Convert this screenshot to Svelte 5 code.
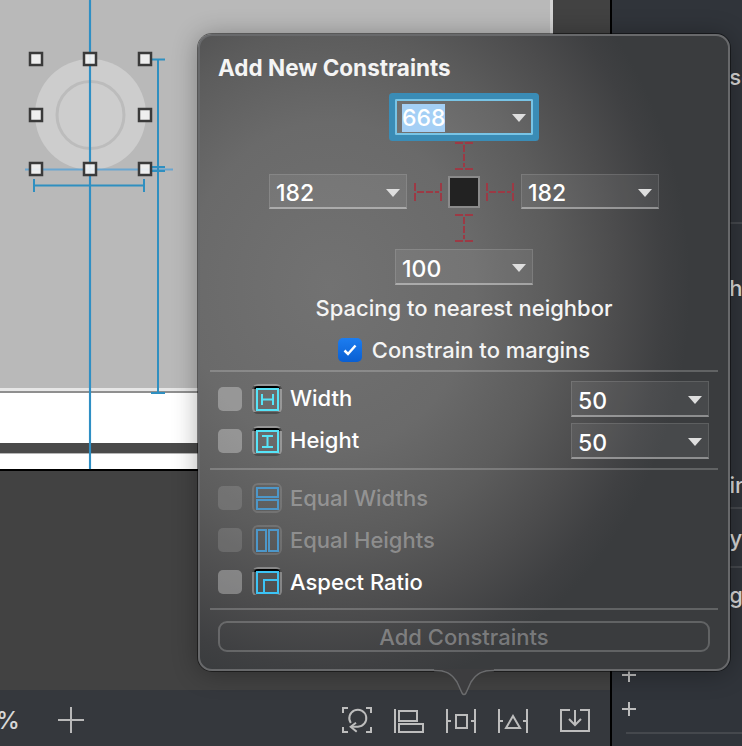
<script lang="ts">
  const handles = [
    [36, 59], [90, 59], [145, 59],
    [36, 115], [145, 115],
    [36, 169], [90, 169], [145, 169],
  ];

  const sizeRows = [
    { label: 'Width', value: '50', icon: 'width' },
    { label: 'Height', value: '50', icon: 'height' },
  ];

  const ratioRows = [
    { label: 'Equal Widths', icon: 'equal-w', disabled: true },
    { label: 'Equal Heights', icon: 'equal-h', disabled: true },
    { label: 'Aspect Ratio', icon: 'aspect', disabled: false },
  ];

  const iconPaths: Record<string, string> = {
    width: 'M1 1h21v21H1z M6 6v11 M17 6v11 M6 11.5h11',
    height: 'M1 1h21v21H1z M6 6h11 M6 17h11 M11.5 6v11',
    'equal-w': 'M1 1h21v9H1z M1 13h21v9H1z',
    'equal-h': 'M1 1h9v21H1z M13 1h9v21H13z',
    aspect: 'M1 1h21v21H1z M8 22V9h14',
  };
</script>

<div class="window">
  <main class="editor">
    <section class="canvas">
      <div class="device">
        <div class="screen">
          <svg class="drawing" width="200" height="388" viewBox="0 0 200 388">
            <circle cx="90.5" cy="114.500" r="55.500" fill="#cdcdcd" />
            <circle cx="90.5" cy="115" r="33.500" fill="none" stroke="#bcbcbc" stroke-width="3" />
          </svg>
        </div>
        <div class="ledge"></div>
        <div class="white-band"></div>
        <div class="dark-band"></div>
        <div class="white-foot"></div>
      </div>
      <div class="guide"></div>
      <svg class="marks" width="200" height="400" viewBox="0 0 200 400">
        <path d="M25 169.500h148" stroke="#6aa6d0" stroke-width="2" />
        <path d="M34 179v13M144 179v13M34 185.500h110" stroke="#2f8fc0" stroke-width="2" fill="none" />
        <path d="M152 59.500h13M158 59.500V393M151 393h14M152 167h13M152 171h13" stroke="#2f8fc0" stroke-width="2" fill="none" />
        {#each handles as [x, y]}
          <rect x={x - 6} y={y - 6} width="12" height="12" fill="#f2f2f2" fill-opacity="0.92" stroke="#3a3a3a" stroke-width="2.500" />
        {/each}
      </svg>
    </section>

    <footer class="toolbar">
      <span class="zoom-label">%</span>
      <svg class="zoom-plus" width="26" height="26" viewBox="0 0 26 26">
        <path d="M0 13h26M13 0v26" stroke="#b9b9b9" stroke-width="2" />
      </svg>
      <div class="tools">
        <svg width="30" height="26" viewBox="0 0 30 26" fill="none" stroke="#bdbdbd" stroke-width="2">
          <path d="M1 6V1h5M24 1h5v5M1 20v5h5M24 25h5v-5" />
          <path d="M16 19.700H9M16 19.700A8.500 8.500 0 1 0 8.800 16" />
          <path d="M14 15.700l-5.300 4 6 5" />
        </svg>
        <svg width="30" height="24" viewBox="0 0 30 24" fill="none" stroke="#bdbdbd" stroke-width="2">
          <path d="M1 0v24M5 2h18v10H5zM5 15h24v8H5z" />
        </svg>
        <svg width="30" height="24" viewBox="0 0 30 24" fill="none" stroke="#bdbdbd" stroke-width="2">
          <path d="M1 0v24M29 0v24M1 12h4M25 12h4M10 6h11v13H10z" />
        </svg>
        <svg width="30" height="24" viewBox="0 0 30 24" fill="none" stroke="#bdbdbd" stroke-width="2">
          <path d="M1 0v24M29 0v24M1 12h4M25 12h4M15 7l7 12H8z" />
        </svg>
        <svg class="embed" width="30" height="24" viewBox="0 0 30 24" fill="none" stroke="#bdbdbd" stroke-width="2">
          <path d="M10 2H1v21h28V2h-9M15 2v15M9 11l6 6 6-6" />
        </svg>
      </div>
    </footer>
  </main>

  <aside class="inspector">
    <p class="clipped one">Use</p>
    <div class="line line-a"></div>
    <p class="clipped two">Show</p>
    <p class="clipped three">Main</p>
    <div class="line line-b"></div>
    <p class="clipped four">Layout</p>
    <div class="line line-c"></div>
    <p class="clipped five">Tag</p>
    <svg class="plus plus-top" width="14" height="14" viewBox="0 0 14 14">
      <path d="M0 7h14M7 0v14" stroke="#bdbdbd" stroke-width="2" />
    </svg>
    <svg class="plus plus-low" width="14" height="14" viewBox="0 0 14 14">
      <path d="M0 7h14M7 0v14" stroke="#bdbdbd" stroke-width="2" />
    </svg>
    <div class="line line-d"></div>
  </aside>

  <div class="popover">
    <h2>Add New Constraints</h2>

    <div class="pin-row">
      <div class="spin focused"><span class="selected">668</span><i class="caret"></i></div>
    </div>
    <svg class="strut-v upper" width="18" height="28" viewBox="0 0 18 28" fill="none" stroke="#9c3a45" stroke-width="2">
      <path d="M0 1h18M0 27h18" stroke-dasharray="8 2" />
      <path d="M9 3v22" stroke-dasharray="7 2" />
    </svg>
    <div class="pin-row middle">
      <div class="spin"><span>182</span><i class="caret"></i></div>
      <svg class="strut-h left" width="28" height="18" viewBox="0 0 28 18" fill="none" stroke="#9c3a45" stroke-width="2">
        <path d="M1 0v18M27 0v18" stroke-dasharray="8 2" />
        <path d="M3 9h22" stroke-dasharray="7 2" />
      </svg>
      <div class="view-square"></div>
      <svg class="strut-h right" width="28" height="18" viewBox="0 0 28 18" fill="none" stroke="#9c3a45" stroke-width="2">
        <path d="M1 0v18M27 0v18" stroke-dasharray="8 2" />
        <path d="M3 9h22" stroke-dasharray="7 2" />
      </svg>
      <div class="spin"><span>182</span><i class="caret"></i></div>
    </div>
    <svg class="strut-v lower" width="18" height="28" viewBox="0 0 18 28" fill="none" stroke="#9c3a45" stroke-width="2">
      <path d="M0 1h18M0 27h18" stroke-dasharray="8 2" />
      <path d="M9 3v22" stroke-dasharray="7 2" />
    </svg>
    <div class="pin-row">
      <div class="spin"><span>100</span><i class="caret"></i></div>
    </div>

    <p class="hint">Spacing to nearest neighbor</p>
    <div class="margins">
      <span class="check">
        <svg width="18" height="18" viewBox="0 0 18 18" fill="none" stroke="#fff" stroke-width="2.500">
          <path d="M3.500 9.500l3.500 3.500 7.500-8.500" />
        </svg>
      </span>
      <span>Constrain to margins</span>
    </div>

    <div class="divider"></div>

    <div class="size-rows">
      {#each sizeRows as row}
        <div class="option">
          <span class="box"></span>
          <span class="glyph">
            <svg width="23" height="23" viewBox="0 0 23 23" fill="none" stroke="#56e4f8" stroke-width="2">
              <path d={iconPaths[row.icon]} />
            </svg>
          </span>
          <span class="label">{row.label}</span>
          <div class="spin"><span>{row.value}</span><i class="caret"></i></div>
        </div>
      {/each}
    </div>

    <div class="divider"></div>

    <div class="ratio-rows">
      {#each ratioRows as row}
        <div class="option" class:disabled={row.disabled}>
          <span class="box"></span>
          <span class="glyph">
            <svg width="23" height="23" viewBox="0 0 23 23" fill="none" stroke={row.disabled ? '#4d97c9' : '#3cc3f5'} stroke-width="2">
              <path d={iconPaths[row.icon]} />
            </svg>
          </span>
          <span class="label">{row.label}</span>
        </div>
      {/each}
    </div>

    <div class="divider"></div>

    <button class="add" disabled>Add Constraints</button>

    <svg class="arrow" width="60" height="28" viewBox="0 0 60 28">
      <path d="M0 1C12 1 17 4 23 13L28 24Q30 27 32 24L37 13C43 4 48 1 60 1V0H0Z" fill="#3d3d3f" />
      <path d="M0 1.500C12 1.500 17 4 23 13L28 24Q30 27 32 24L37 13C43 4 48 1.500 60 1.500" fill="none" stroke="#6a6b6d" stroke-width="1.500" />
    </svg>
  </div>
</div>

<style>
  :global(body) {
    margin: 0;
    background: #30343a;
    font-family: Inter, 'Liberation Sans', sans-serif;
  }

  .window {
    position: relative;
    display: flex;
    width: 742px;
    height: 746px;
    overflow: hidden;
  }

  .editor {
    width: 610px;
    display: flex;
    flex-direction: column;
    border-right: 2px solid #000;
    flex-shrink: 0;
  }

  .canvas {
    position: relative;
    height: 690px;
    background: #424242;
  }

  .device {
    width: 550px;
    border-right: 3px solid #d4d4d4;
    border-bottom: 2px solid #000;
  }

  .screen {
    position: relative;
    height: 388px;
    background: #b9b9b9;
  }

  .drawing {
    position: absolute;
    left: 0;
    top: 0;
  }

  .marks {
    position: absolute;
    left: 0;
    top: 0;
  }

  .ledge {
    height: 5px;
    background: linear-gradient(#e6e6e6 55%, #8f8f8f 55%);
  }

  .white-band {
    height: 50px;
    background: #fff;
  }

  .dark-band {
    height: 11px;
    background: #4a4a4a;
    border-bottom: 1px solid #b5b5b5;
    box-sizing: border-box;
  }

  .white-foot {
    height: 15px;
    background: #fff;
  }

  .guide {
    position: absolute;
    left: 89px;
    top: 0;
    width: 2px;
    height: 469px;
    background: #2f8fc4;
    box-shadow: 0 0 1px rgba(47, 143, 196, 0.7);
  }

  .toolbar {
    position: relative;
    flex: 1;
    display: flex;
    align-items: center;
    box-sizing: border-box;
    padding-top: 4px;
    background: #35383d;
  }

  .zoom-label {
    margin-left: -4px;
    width: 62px;
    font-size: 24px;
    font-weight: 500;
    color: #d8d8d8;
  }

  .zoom-plus {
    flex-shrink: 0;
  }

  .tools {
    display: flex;
    align-items: center;
    gap: 22px;
    margin-left: 258px;
  }

  .tools .embed {
    margin-left: 10px;
  }

  .tools svg:nth-child(n + 2):nth-child(-n + 4) {
    margin-top: 1px;
  }

  .inspector {
    flex: 1;
    position: relative;
    background: #30343a;
    color: #d8d8d8;
    font-size: 22px;
    font-weight: 500;
    overflow: hidden;
  }

  .clipped {
    position: absolute;
    margin: 0;
    line-height: 24px;
    white-space: nowrap;
  }

  .one { left: 101px; top: 65px; }
  .two { left: 103px; top: 276px; }
  .three { left: 85px; top: 473px; }
  .four { left: 93px; top: 526px; }
  .five { left: 92px; top: 583px; }

  .line {
    position: absolute;
    right: 0;
    height: 2px;
    background: #45484d;
  }

  .line-a { left: 100px; top: 222px; }
  .line-b { left: 100px; top: 507px; }
  .line-c { left: 100px; top: 566px; }
  .line-d { left: 14px; top: 732px; }

  .plus {
    position: absolute;
    left: 10px;
  }

  .plus-top { top: 668px; }
  .plus-low { top: 702px; }

  .popover {
    position: absolute;
    left: 198px;
    top: 34px;
    width: 532px;
    height: 637px;
    box-sizing: border-box;
    padding: 19px 10px 0;
    display: flex;
    flex-direction: column;
    align-items: center;
    border: 2px solid #68696b;
    border-radius: 14px;
    color: #fff;
    background: radial-gradient(ellipse 360px 410px at 130px 250px, #727272 0%, #6a6a6a 40%, #5c5c5c 62%, #4c4c4d 80%, #3f4042 93%, #3a3c3e 100%);
    box-shadow: 0 0 0 1px rgba(0, 0, 0, 0.45), 0 2px 26px rgba(0, 0, 0, 0.32);
  }

  h2 {
    align-self: flex-start;
    margin: 0 0 18px 8px;
    font-size: 22.500px;
    line-height: 26px;
    font-weight: 700;
    color: #f4f4f4;
  }

  .pin-row {
    display: flex;
    align-items: center;
    gap: 6px;
  }

  .strut-v {
    display: block;
  }

  .strut-v.upper {
    margin: 7px 0 4px;
  }

  .strut-v.lower {
    margin: 5px 0 7px;
  }

  .strut-h.left {
    margin-left: 1px;
  }

  .strut-h.right {
    margin-right: 1px;
  }

  .spin {
    position: relative;
    width: 138px;
    height: 36px;
    box-sizing: border-box;
    padding: 4px 0 0 6px;
    display: flex;
    align-items: center;
    font-size: 23px;
    font-weight: 500;
    color: #fff;
    background: rgba(255, 255, 255, 0.07);
    border: 1px solid rgba(255, 255, 255, 0.12);
    border-bottom: 2px solid rgba(255, 255, 255, 0.38);
  }

  .middle .spin {
    height: 35px;
  }

  .focused {
    border: 2px solid #78c4e6;
    padding: 1px 0 0 5px;
    border-radius: 1px;
    box-shadow: 0 0 0 6px #3a8cb6;
  }

  .selected {
    background: #a4cff5;
    line-height: 28px;
  }

  .caret {
    position: absolute;
    right: 6px;
    top: 14px;
    width: 0;
    height: 0;
    border-left: 7px solid transparent;
    border-right: 7px solid transparent;
    border-top: 8px solid #dedede;
  }

  .focused .caret {
    right: 5px;
    top: 13px;
  }

  .view-square {
    width: 32px;
    height: 32px;
    box-sizing: border-box;
    background: #222;
    border: 2px solid #8a8a8a;
  }

  .hint {
    margin: 10px 0 0;
    font-size: 22px;
    font-weight: 500;
    line-height: 26px;
    color: #f4f4f4;
  }

  .margins {
    display: flex;
    align-items: center;
    gap: 10px;
    margin-top: 16px;
    font-size: 22px;
    font-weight: 500;
    line-height: 26px;
    color: #f4f4f4;
  }

  .check {
    width: 24px;
    height: 24px;
    border-radius: 5px;
    background: linear-gradient(#1c7df0, #0a5fd2);
    display: flex;
    align-items: center;
    justify-content: center;
  }

  .divider {
    align-self: stretch;
    height: 2px;
    flex-shrink: 0;
    background: rgba(255, 255, 255, 0.2);
  }

  .margins + .divider {
    margin-top: 7px;
  }

  .size-rows {
    align-self: stretch;
    display: flex;
    flex-direction: column;
    gap: 6px;
    padding: 9px 9px 9px 8px;
  }

  .ratio-rows {
    align-self: stretch;
    display: flex;
    flex-direction: column;
    gap: 12px;
    padding: 13px 9px 11px 8px;
  }

  .option {
    display: flex;
    align-items: center;
    height: 30px;
    font-size: 22px;
    font-weight: 500;
    color: #fff;
  }

  .size-rows .option {
    height: 36px;
  }

  .size-rows .label {
    padding-bottom: 2px;
  }

  .box {
    width: 24px;
    height: 24px;
    border-radius: 5px;
    background: rgba(255, 255, 255, 0.3);
    margin-right: 10px;
  }

  .glyph {
    width: 30px;
    height: 30px;
    box-sizing: border-box;
    border: 2px solid rgba(255, 255, 255, 0.3);
    border-radius: 6px;
    display: flex;
    align-items: center;
    justify-content: center;
    margin-right: 8px;
    background: linear-gradient(#000 3px, transparent 3px);
  }

  .label {
    flex: 1;
  }

  .disabled {
    color: rgba(255, 255, 255, 0.32);
  }

  .disabled .box {
    background: rgba(255, 255, 255, 0.13);
  }

  .disabled .glyph {
    border-color: rgba(255, 255, 255, 0.13);
    background: none;
  }

  .add {
    width: 492px;
    height: 31px;
    margin-top: 11px;
    padding: 0;
    border: 2px solid rgba(255, 255, 255, 0.2);
    border-radius: 9px;
    background: none;
    font-family: inherit;
    font-size: 22px;
    font-weight: 500;
    color: rgba(255, 255, 255, 0.33);
  }

  .arrow {
    position: absolute;
    left: 234px;
    bottom: -28px;
  }
</style>
